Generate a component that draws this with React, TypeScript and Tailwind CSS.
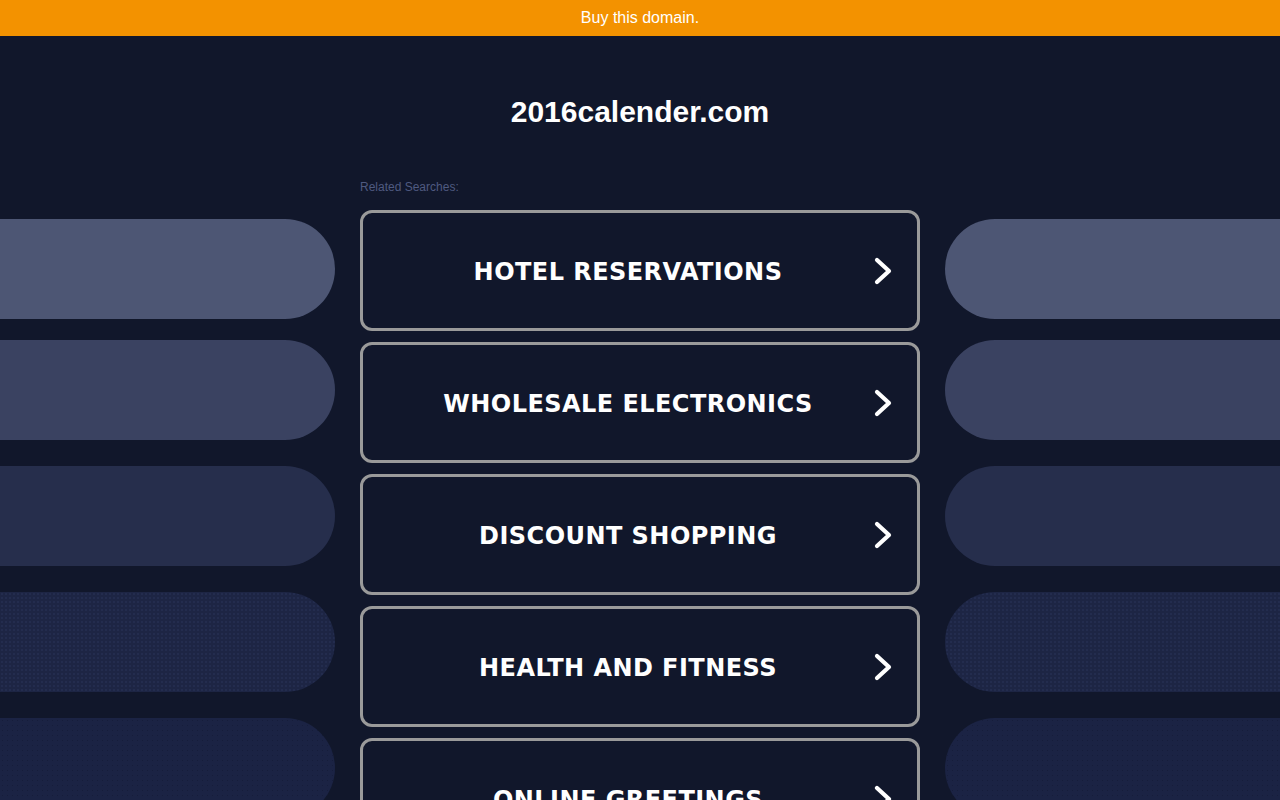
import React from "react";

const items = [
  "HOTEL RESERVATIONS",
  "WHOLESALE ELECTRONICS",
  "DISCOUNT SHOPPING",
  "HEALTH AND FITNESS",
  "ONLINE GREETINGS",
];

function Chevron() {
  return (
    <svg width="20" height="30" viewBox="0 0 20 30" fill="none">
      <polyline
        points="4,4 16,15 4,26"
        stroke="#ffffff"
        strokeWidth="4.2"
        strokeLinecap="round"
        strokeLinejoin="round"
      />
    </svg>
  );
}

function LeftPills({ side }: { side: "left" | "right" }) {
  const round = side === "left" ? "rounded-r-[50px]" : "rounded-l-[50px]";
  return (
    <div className="flex flex-col pt-[41px]">
      <div className={`h-[100px] bg-[#4d5674] ${round}`} />
      <div className={`mt-[21px] h-[100px] bg-[#3a4261] ${round}`} />
      <div className={`mt-[26px] h-[100px] bg-[#262e4c] ${round}`} />
      <div
        className={`mt-[26px] h-[100px] bg-[#1d2544] bg-[radial-gradient(#232c4e_0.8px,transparent_0.8px)] bg-[length:4px_4px] ${round}`}
      />
      <div
        className={`mt-[26px] h-[100px] bg-[#1b2344] bg-[radial-gradient(#161d3a_0.8px,transparent_0.8px)] bg-[length:5px_5px] ${round}`}
      />
    </div>
  );
}

export default function App() {
  return (
    <div className="min-h-[800px] h-[800px] overflow-hidden bg-[#11172b] font-['Liberation_Sans',Arial,sans-serif]">
      <div className="h-[36px] bg-[#f39200] flex items-center justify-center text-white text-[16px]">
        Buy this domain.
      </div>
      <div className="flex justify-center pt-[56px] h-[142px]">
        <h1 className="text-white font-bold text-[30px] leading-[40px]">
          2016calender.com
        </h1>
      </div>
      <div className="grid grid-cols-[335px_560px_335px] gap-x-[25px]">
        <LeftPills side="left" />
        <div className="flex flex-col">
          <div className="text-[12px] leading-[16px] text-[#4f5a80] h-[32px] pt-[1px]">
            Related Searches:
          </div>
          {items.map((t) => (
            <div
              key={t}
              className="mb-[11px] h-[121px] shrink-0 border-[3px] border-[#9a9a9a] rounded-[12px] flex items-center relative"
            >
              <div className="flex-1 text-center pr-[24px] pt-[3px] text-white font-bold text-[24px] tracking-[0.45px] font-['DejaVu_Sans',Verdana,sans-serif]">
                {t}
              </div>
              <div className="absolute right-[24px] top-1/2 -translate-y-1/2 flex">
                <Chevron />
              </div>
            </div>
          ))}
        </div>
        <LeftPills side="right" />
      </div>
    </div>
  );
}
